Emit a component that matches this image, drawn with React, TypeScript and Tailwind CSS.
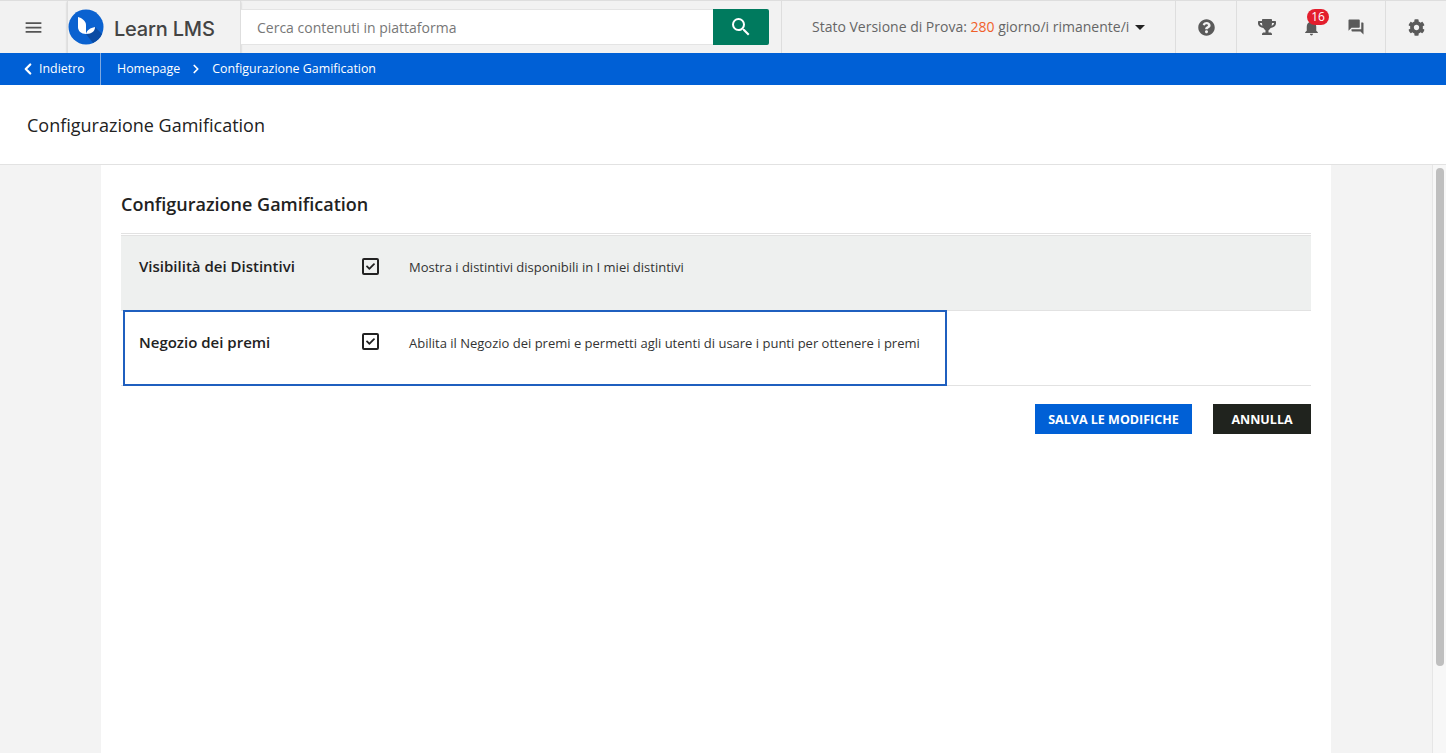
import { ChevronLeft, ChevronRight } from 'lucide-react';
import { FaCheck, FaCog, FaQuestionCircle, FaTrophy } from 'react-icons/fa';
import { MdForum, MdMenu, MdNotifications, MdSearch } from 'react-icons/md';

function Logo() {
  return (
    <svg width="36" height="36" viewBox="0 0 36 36">
      <circle cx="18" cy="18" r="17.5" fill="#0b62d0" />
      <path d="M18 25 L27 18 L34 25 A17.5 17.5 0 0 1 25 34 Z" fill="#0a4ba3" />
      <path d="M10 8 C14 9 18 12 18 16 L18 25 C13 25 10 22 10 18 Z" fill="#fff" />
      <path d="M18 25 C19 21 22 19 27 18 C27 22 24 25 18 25 Z" fill="#fff" />
    </svg>
  );
}

function CheckBox() {
  return (
    <span className="flex h-[17px] w-[17px] items-center justify-center rounded-[2px] border-2 border-[#222]">
      <FaCheck size={9} className="text-[#222]" />
    </span>
  );
}

function Row({ title, text, gray }: { title: string; text: string; gray?: boolean }) {
  return (
    <div className={`flex h-[75px] border-t border-[#e2e2e2] ${gray ? 'bg-[#eef0ef] pt-[20px]' : 'bg-white pt-[21px]'}`}>
      <div className="w-[241px] pl-[18px] text-[15px] leading-5 font-semibold text-[#222]">{title}</div>
      <div className={`w-[47px] ${gray ? 'pt-[2px]' : 'pt-px'}`}><CheckBox /></div>
      <div className="pt-px text-[13px] leading-5 text-[#333]">{text}</div>
    </div>
  );
}

export default function App() {
  return (
    <div className="flex h-[753px] w-[1446px] flex-col overflow-hidden bg-white font-['Open_Sans',sans-serif]">
      <header className="flex h-[53px] shrink-0 items-stretch border-t border-[#dedede] bg-[#f2f2f2] text-[#5c5c5c]">
        <div className="flex w-[67px] items-center pl-[23px]">
          <MdMenu size={21} className="text-[#555]" />
        </div>
        <div className="flex w-[174px] items-center gap-[10px] border-x border-[#dedede] shadow-[0_1px_2px_rgba(0,0,0,0.2)]">
          <Logo />
          <span className="mt-[3px] font-['Inter',sans-serif] text-[20px] font-medium tracking-[-0.2px] text-[#444]">Learn LMS</span>
        </div>
        <div className="flex items-center">
          <div className="flex h-[36px] w-[472px] items-center border-y border-[#e4e4e4] bg-white pl-4 text-[14px] text-[#777]">
            Cerca contenuti in piattaforma
          </div>
          <button className="flex h-[36px] w-[56px] items-center justify-center rounded-r-[2px] bg-[#007a5e] text-white">
            <MdSearch size={24} />
          </button>
        </div>
        <div className="ml-3 flex w-[395px] items-center border-x border-[#dedede] pb-[2px] pl-[30px] text-[14px] text-[#666]">
          Stato Versione di Prova:&nbsp;<span className="text-[#f0602a]">280</span>&nbsp;giorno/i rimanente/i
          <span className="mt-[2px] ml-[6px] h-0 w-0 border-x-[5px] border-t-[5px] border-x-transparent border-t-[#222]" />
        </div>
        <div className="flex w-[61px] items-center justify-center border-r border-[#dedede]">
          <FaQuestionCircle size={17} className="text-[#5a5a5a]" />
        </div>
        <div className="flex w-[149px] items-center gap-[26px] border-r border-[#dedede] pl-[21px]">
          <FaTrophy size={18} className="text-[#5a5a5a]" />
          <span className="relative">
            <MdNotifications size={19} className="text-[#5a5a5a]" />
            <span className="absolute -top-[9px] left-[5px] flex h-[16px] w-[22px] items-center justify-center rounded-full bg-[#e31e2d] text-[12px] text-white">16</span>
          </span>
          <MdForum size={18} className="text-[#5a5a5a]" />
        </div>
        <div className="flex w-[60px] items-center justify-center">
          <FaCog size={17} className="text-[#5a5a5a]" />
        </div>
      </header>

      <nav className="flex h-[32px] shrink-0 items-center bg-[#0060d6] text-[12.4px] text-white">
        <div className="flex h-full w-[101px] items-center border-r border-[#7fa9e0] pl-[19px]">
          <ChevronLeft size={18} strokeWidth={3} />
          <span className="ml-[2px]">Indietro</span>
        </div>
        <span className="ml-[16px]">Homepage</span>
        <ChevronRight size={14} strokeWidth={3} className="mx-[9px]" />
        <span>Configurazione Gamification</span>
      </nav>

      <div className="flex h-[80px] shrink-0 items-center border-b border-[#e2e2e2] bg-white pt-[2px] pl-[27px] text-[18px] text-[#222]">
        Configurazione Gamification
      </div>

      <div className="flex min-h-0 flex-1 bg-[#f3f3f3]">
        <div className="flex flex-1 justify-center">
          <main className="w-[1230px] bg-white px-5 pt-[26px]">
            <h1 className="h-[42px] text-[18px] leading-[26px] font-semibold text-[#222]">Configurazione Gamification</h1>
            <div className="border-t border-[#e2e2e2] pt-px">
              <Row gray title="Visibilità dei Distintivi" text="Mostra i distintivi disponibili in I miei distintivi" />
              <div className="relative border-b border-[#e2e2e2]">
                <Row title="Negozio dei premi" text="Abilita il Negozio dei premi e permetti agli utenti di usare i punti per ottenere i premi" />
                <div className="absolute top-0 left-[2px] h-[76px] w-[824px] border-2 border-[#1f5fbf]" />
              </div>
            </div>
            <div className="mt-[18px] flex justify-end gap-[21px]">
              <button className="h-[30px] w-[157px] bg-[#0060d6] pt-[2px] text-[12.5px] font-bold text-white">SALVA LE MODIFICHE</button>
              <button className="h-[30px] w-[98px] bg-[#20231e] pt-[2px] text-[12.5px] font-bold text-white">ANNULLA</button>
            </div>
          </main>
        </div>
        <div className="w-[14px] shrink-0 border-l border-[#e6e6e6] bg-[#f7f7f7] pt-[3px] pl-[3px]">
          <div className="h-[498px] w-[8px] rounded-full bg-[#bfbfbf]" />
        </div>
      </div>
    </div>
  );
}
